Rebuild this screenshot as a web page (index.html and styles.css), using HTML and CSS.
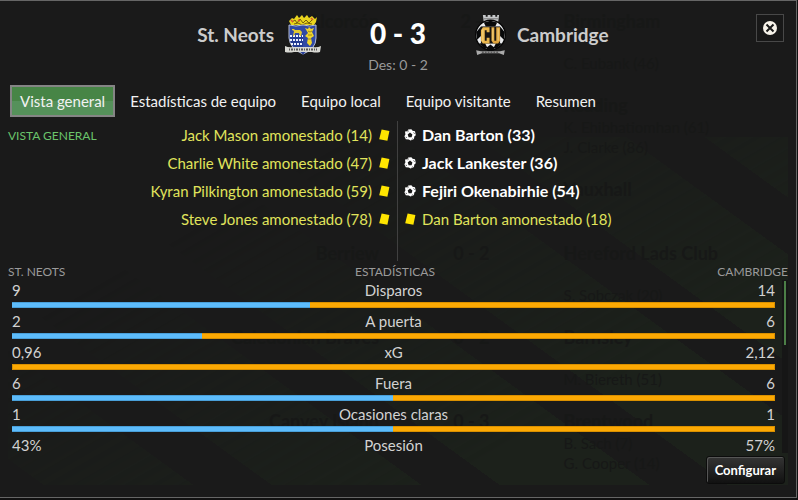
FILE: index.html
```html
<!DOCTYPE html>
<html lang="es">
<head>
<meta charset="utf-8">
<meta name="viewport" content="width=device-width, initial-scale=1">
<title>St. Neots 0 - 3 Cambridge</title>
<link rel="stylesheet" href="styles.css">
</head>
<body>
<svg class="sprites" aria-hidden="true">
  <symbol id="card" viewBox="0 0 12 12"><path d="M3.600.6 11.400 2 9.400 11.800 1.200 10.200Z" fill="#ffe500"/></symbol>
  <symbol id="ball" viewBox="0 0 12 12">
    <path d="M4.200.4 7.400.2l1.200 1.600 2.400.4.800 4-1.500 1.400-.3 2.400-3.400 1.600-1.800-1.200-3-.2L.4 7.200l1-1.700-.4-2.900 2.400-.4Z" fill="#fff"/>
    <path d="m6 3.600 2.400 1.800-.8 2.800H4.600L3.700 5.500Z" fill="#1a1a1a"/>
    <path d="m3.600 2.800 1.200-1M9.600 3.400l1 1.400M2 7.800l.6 1.200M8.800 9.400l-1 1" stroke="#1a1a1a" stroke-width=".7" fill="none"/>
  </symbol>
</svg>
<main class="dialog">
  <div class="backdrop" aria-hidden="true"></div>
  <div class="results" aria-hidden="true">
    <div class="result"><b>Alcorcón</b><b>2 -</b><b>Birmingham</b><span></span><span>C. Eubank (46)</span></div>
    <div class="result"><b></b><b></b><b>Reading</b><span>K. Ehibhatiomhan (61)</span><span>J. Clarke (86)</span></div>
    <div class="result short"><b></b><b></b><b>Vauxhall</b></div>
    <div class="result"><b>Berriew</b><b>0 - 2</b><b>Hereford Lads Club</b><span></span><span>S. Sobczak (20)</span></div>
    <div class="result"><b>Caledonian Braves</b><b>0 - 2</b><b>Barnsley</b><span></span><span>M. Biereth (51)</span></div>
    <div class="result"><b>Canvey Island</b><b>0 - 3</b><b>Brentwood</b><span>B. Sach (7)</span><span>G. Cooper (14)</span></div>
  </div>

  <header class="score-bar">
    <div class="team home">
      <h2>St. Neots</h2>
      <svg class="crest" viewBox="0 0 38 42" role="img" aria-label="Escudo de St. Neots">
        <path d="M7 11 5 7l3-3 2 1 3-4 2 3 3-3 2 3 3-3 2 3 3-2 3 3 2-2-1 5-2 3Z" fill="#ead51e"/>
        <path d="m8 8 3-2 2 3 3-4 3 4 3-3 3 3 3-3M10 10l4-1 4 2 5-2 5 1" stroke="#75600c" fill="none"/>
        <path d="m7 6 2 2M14 6l2 1M27 4l2 2" stroke="#d6532f" stroke-width="1.500"/>
        <path d="M5 11q7 2 14 0 7 2 13 0v13q0 11-13 16Q6 35 5 24Z" fill="#3049a5" stroke="#b6bed6"/>
        <path d="M6 22h13v16q-9-4-12-9Z" fill="#243b91"/>
        <path d="M6 22h13M6 26h13M7 30h12" stroke="#edf2ff" stroke-width="2" stroke-dasharray="2 1"/>
        <path d="M8 15h2l1 1h5l2 2-1 4h-1l-1-3h-4l-1 3H9l1-5-2-1Z" fill="#e3ca32"/>
        <path d="m25 13 2 2 3-1-2 4 2 4-3 2 1 5-2 3-3-3 1-5-3-2 3-3-3-5 3 1Z" fill="#f0d62d"/>
        <path d="m24 17 2 1 2-1M24 21h4M24 25h3" stroke="#9f8419" fill="none"/>
        <path d="M1 32q4 2 8 1h20q4 1 8-1l-1 6q-4 1-8 0H10q-5 1-9 0Z" fill="#d8d8d3"/>
        <path d="M5 35.500h28" stroke="#555" stroke-width="2" stroke-dasharray="1 1 2 1"/>
        <path d="M17 38h4l-2 3Z" fill="#283f98"/>
      </svg>
    </div>
    <div class="score">
      <h1>0 - 3</h1>
      <p>Des: 0 - 2</p>
    </div>
    <div class="team away">
      <svg class="crest" viewBox="0 0 34 44" role="img" aria-label="Escudo de Cambridge">
        <path d="M9 1h3v2h2V1h3v2h2V1h3v2h2V1h2l-1 8H10Z" fill="#c5c7c9"/>
        <path d="M10 5h15" stroke="#777"/>
        <circle cx="17" cy="22" r="15.500" fill="#e9ebed" stroke="#060606" stroke-width="1.500"/>
        <path d="m10 9 7-2 7 2-2 4H12Z M2 19l5-6 0 10-4 4Z M32 19l-5-6 0 10 4 4Z M5 31l6-1 3 6-4 0Z M29 31l-6-1-3 6 4 0Z" fill="#08090a"/>
        <path d="M7 13h20v18H7Z" fill="#171513"/>
        <path d="M16 19v-5H9l-2 3v11l2 3h7v-6h-3v3h-2V17h2v2Z" fill="#e9b64c"/>
        <path d="M18 14h3v14h2V14h4v14l-2 3h-5l-2-3Z" fill="#dca23c"/>
        <path d="M9 16v13M19.500 15v13M25 15v13" stroke="#f6d887"/>
        <path d="m13 35 4-3 4 3-1 4h-6Z" fill="#08090a"/>
        <path d="m2 38 5 1h20l5-1-1 5-5-2H8l-5 2Z" fill="#aaa"/>
        <path d="M8 40h18" stroke="#333" stroke-dasharray="2 1"/>
      </svg>
      <h2>Cambridge</h2>
    </div>
    <button class="close" type="button" aria-label="Cerrar">
      <svg viewBox="0 0 14 14" aria-hidden="true"><circle cx="7" cy="7" r="7" fill="#f7f3ea"/><path d="m3.500 3.500 7 7m0-7-7 7" stroke="#1a1a1a" stroke-width="2"/></svg>
    </button>
  </header>

  <nav class="tabs">
    <a class="active" href="#general" aria-current="page">Vista general</a>
    <a href="#equipo">Estadísticas de equipo</a>
    <a href="#local">Equipo local</a>
    <a href="#visitante">Equipo visitante</a>
    <a href="#resumen">Resumen</a>
  </nav>

  <section class="events" id="general">
    <h3>VISTA GENERAL</h3>
    <ul class="event-list home-events">
      <li class="booking">Jack Mason amonestado (14)<svg><use href="#card"/></svg></li>
      <li class="booking">Charlie White amonestado (47)<svg><use href="#card"/></svg></li>
      <li class="booking">Kyran Pilkington amonestado (59)<svg><use href="#card"/></svg></li>
      <li class="booking">Steve Jones amonestado (78)<svg><use href="#card"/></svg></li>
    </ul>
    <ul class="event-list away-events">
      <li class="goal"><svg><use href="#ball"/></svg>Dan Barton (33)</li>
      <li class="goal"><svg><use href="#ball"/></svg>Jack Lankester (36)</li>
      <li class="goal"><svg><use href="#ball"/></svg>Fejiri Okenabirhie (54)</li>
      <li class="booking"><svg><use href="#card"/></svg>Dan Barton amonestado (18)</li>
    </ul>
  </section>

  <section class="stats">
    <div class="stats-head"><span>ST. NEOTS</span><span>ESTADÍSTICAS</span><span>CAMBRIDGE</span></div>
    <div class="stats-body">
      <div class="stats-list">
        <div class="stat"><span>9</span><span>Disparos</span><span>14</span><div class="bar"><i style="width:39.2%"></i></div></div>
        <div class="stat"><span>2</span><span>A puerta</span><span>6</span><div class="bar"><i style="width:25%"></i></div></div>
        <div class="stat"><span>0,96</span><span>xG</span><span>2,12</span><div class="bar"><i style="width:0%"></i></div></div>
        <div class="stat"><span>6</span><span>Fuera</span><span>6</span><div class="bar"><i style="width:50%"></i></div></div>
        <div class="stat"><span>1</span><span>Ocasiones claras</span><span>1</span><div class="bar"><i style="width:50%"></i></div></div>
        <div class="stat"><span>43%</span><span>Posesión</span><span>57%</span></div>
      </div>
      <div class="scroll-track"><div class="scroll-thumb"></div></div>
    </div>
  </section>

  <footer class="actions"><button class="configure" type="button">Configurar</button></footer>
</main>
</body>
</html>
```

FILE: styles.css
```css
* { box-sizing: border-box; }

body {
  margin: 0;
  background: #111;
  color: #d2d2d2;
  font: 15px/20px Lato, "Open Sans", sans-serif;
}

h1, h2, h3, p, ul { margin: 0; padding: 0; }
button { font: inherit; }
.sprites { display: none; }

.dialog {
  position: relative;
  isolation: isolate;
  display: flex;
  flex-direction: column;
  min-height: calc(100vh - 2px);
  margin-right: 1px;
  padding: 0 8px 12px;
  background: #1a1a1a;
  border: solid #666;
  border-width: 1px 1px 1px 0;
}

/* Faint diagonal pitch stripes behind the panel */
.backdrop {
  position: absolute;
  inset: 136px 8px 12px;
  z-index: -2;
  background: repeating-linear-gradient(36deg, transparent 0 21px, #1c211b 21px 109px, transparent 109px 134px);
  mask-image: linear-gradient(150deg, transparent 25%, #000 75%);
}

/* Results list showing faintly through the dialog */
.results {
  position: absolute;
  inset: 10px 8px 12px;
  z-index: -1;
  overflow: hidden;
  color: #171817;
}
.result {
  display: grid;
  grid-template-columns: 372fr 185fr 225fr;
  grid-template-rows: 22px 20px 20px;
  height: 84px;
}
.short { height: 64px; }
.result b { font-size: 18px; white-space: nowrap; }
.result b:nth-child(1) { text-align: right; }
.result b:nth-child(2) { text-align: center; }
.result span { grid-column: 3; white-space: nowrap; }

.score-bar {
  position: relative;
  display: grid;
  grid-template-columns: 1fr 152px 1fr;
  height: 84px;
  padding-top: 12px;
}

.team { display: flex; gap: 10px; height: 44px; align-items: center; }
.team h2 { font-size: 19px; line-height: 24px; font-weight: 700; color: #ccc; }
.home { justify-content: flex-end; }
.crest { height: 42px; }
.home .crest { width: 38px; }
.away .crest { width: 33px; }

.score { text-align: center; }
.score h1 { font-size: 28px; line-height: 40px; font-weight: 900; color: #fff; }
.score p { margin-top: 2px; font-size: 14px; color: #999; }

.close {
  position: absolute;
  top: 13px;
  right: 4px;
  display: grid;
  place-items: center;
  width: 28px;
  height: 28px;
  padding: 0;
  background: #181818;
  border: 1px solid #484848;
}
.close svg { width: 14px; height: 14px; }

.tabs { display: flex; gap: 5px; margin-left: 2px; }
.tabs a {
  padding: 5px 9px;
  border: 1px solid transparent;
  color: #f2f2f2;
  text-decoration: none;
  white-space: nowrap;
}
.tabs .active {
  background: linear-gradient(#478546 50%, #55915a 50%);
  border: 2px solid #858585;
  padding: 4px 8px;
}

.events {
  position: relative;
  display: grid;
  grid-template-columns: 1fr 1fr;
  min-height: 140px;
  margin-top: 4px;
}
.events h3 {
  position: absolute;
  top: 5px;
  left: 0;
  font-size: 12px;
  font-weight: 400;
  color: #6bc46b;
}
.event-list { list-style: none; }
.event-list li { display: flex; align-items: center; gap: 6px; height: 28px; }
.event-list svg { width: 12px; height: 12px; }
.home-events { padding-right: 7px; border-right: 1px solid #404040; }
.home-events li { justify-content: flex-end; }
.away-events { padding-left: 6px; }
.booking { color: #e0e45c; }
.event-list .goal { color: #fff; font-size: 16px; font-weight: 700; }

.stats-head, .stat {
  display: grid;
  grid-template-columns: 1fr auto 1fr;
}
.stats-head > :nth-child(3), .stat > :nth-child(3) { text-align: right; }
.stats-head {
  padding-top: 2px;
  font-size: 12px;
  line-height: 17px;
  color: #9a9a9a;
}
.stats-head > :nth-child(2) { padding-right: 6px; }
.stats-body { display: flex; gap: 7px; }
.stats-list { flex: 1; padding-left: 4px; }
.stat { height: 31px; grid-template-rows: 22px 6px; }
.stat:last-child { height: 18px; }
.bar {
  grid-column: 1 / -1;
  display: flex;
  background: #fca903;
  border: 1px solid #d99000;
}
.bar i {
  margin: -1px 0 -1px -1px;
  background: #5dbcfb;
  border: solid #499fd8;
  border-width: 1px 0;
}

.scroll-track { width: 6px; padding: 1px 2px; background: #161616; }
.scroll-thumb { width: 2px; height: 64px; background: #4c7f47; }

.actions { display: flex; justify-content: flex-end; padding: 3px 3px 0 0; }
.configure {
  height: 28px;
  padding: 0 8px;
  font-size: 13px;
  font-weight: 700;
  color: #fff;
  background: linear-gradient(#343434, #111);
  border: 1px solid #0c0c0c;
  border-radius: 3px;
  box-shadow: inset 1px 1px #555;
}
```
